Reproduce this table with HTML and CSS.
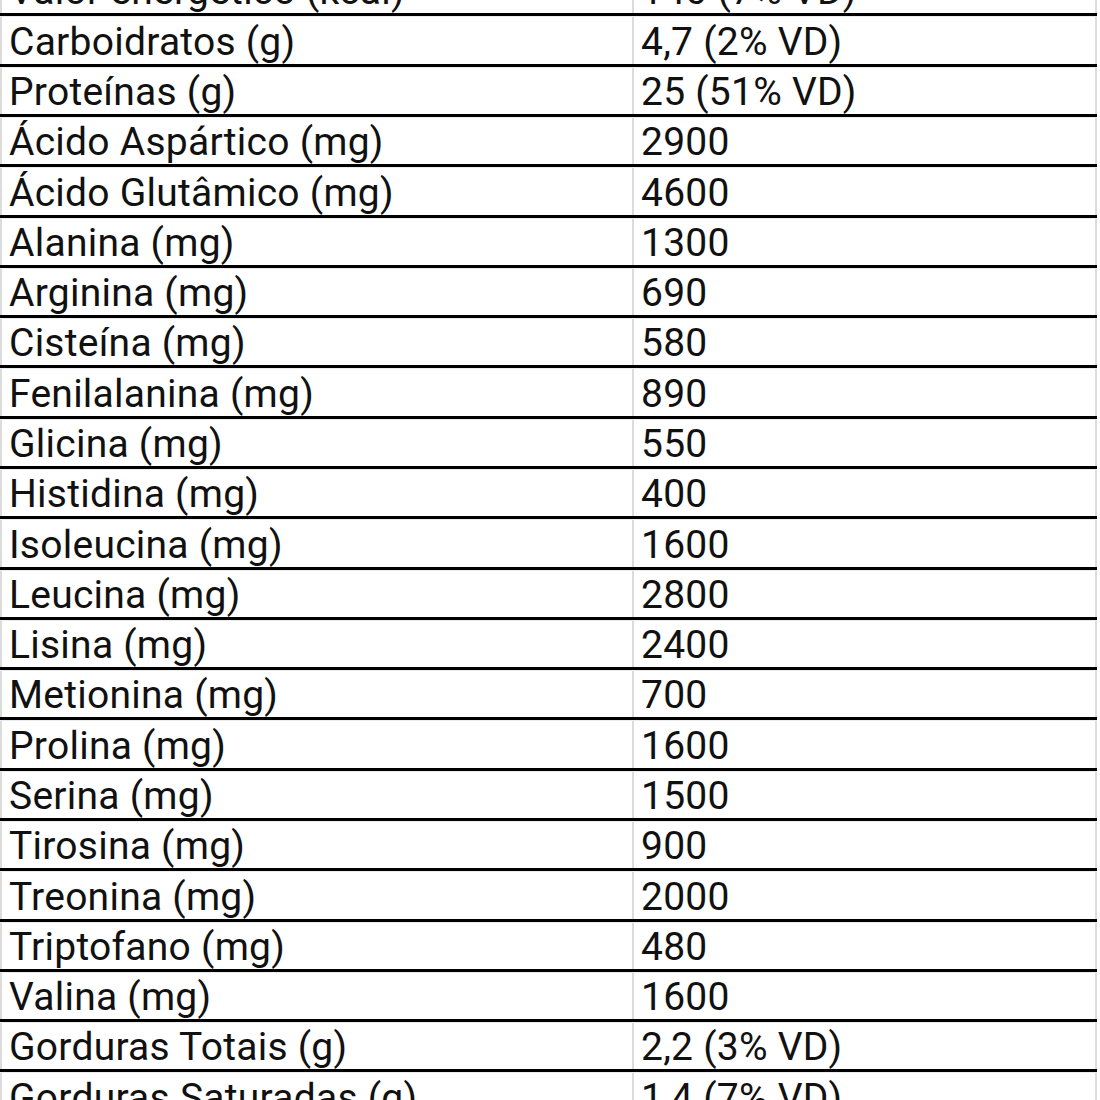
FILE: index.html
```html
<!DOCTYPE html>
<html lang="pt">
<head>
<meta charset="utf-8">
<title>Tabela nutricional</title>
<link rel="stylesheet" href="styles.css">
</head>
<body>
<div class="viewport">
  <div class="sheet">
    <div class="row"><div class="cell name">Valor energético (kcal)</div><div class="cell val">140 (7% VD)</div></div>
    <div class="row"><div class="cell name">Carboidratos (g)</div><div class="cell val">4,7 (2% VD)</div></div>
    <div class="row"><div class="cell name">Proteínas (g)</div><div class="cell val">25 (51% VD)</div></div>
    <div class="row"><div class="cell name">Ácido Aspártico (mg)</div><div class="cell val">2900</div></div>
    <div class="row"><div class="cell name">Ácido Glutâmico (mg)</div><div class="cell val">4600</div></div>
    <div class="row"><div class="cell name">Alanina (mg)</div><div class="cell val">1300</div></div>
    <div class="row"><div class="cell name">Arginina (mg)</div><div class="cell val">690</div></div>
    <div class="row"><div class="cell name">Cisteína (mg)</div><div class="cell val">580</div></div>
    <div class="row"><div class="cell name">Fenilalanina (mg)</div><div class="cell val">890</div></div>
    <div class="row"><div class="cell name">Glicina (mg)</div><div class="cell val">550</div></div>
    <div class="row"><div class="cell name">Histidina (mg)</div><div class="cell val">400</div></div>
    <div class="row"><div class="cell name">Isoleucina (mg)</div><div class="cell val">1600</div></div>
    <div class="row"><div class="cell name">Leucina (mg)</div><div class="cell val">2800</div></div>
    <div class="row"><div class="cell name">Lisina (mg)</div><div class="cell val">2400</div></div>
    <div class="row"><div class="cell name">Metionina (mg)</div><div class="cell val">700</div></div>
    <div class="row"><div class="cell name">Prolina (mg)</div><div class="cell val">1600</div></div>
    <div class="row"><div class="cell name">Serina (mg)</div><div class="cell val">1500</div></div>
    <div class="row"><div class="cell name">Tirosina (mg)</div><div class="cell val">900</div></div>
    <div class="row"><div class="cell name">Treonina (mg)</div><div class="cell val">2000</div></div>
    <div class="row"><div class="cell name">Triptofano (mg)</div><div class="cell val">480</div></div>
    <div class="row"><div class="cell name">Valina (mg)</div><div class="cell val">1600</div></div>
    <div class="row"><div class="cell name">Gorduras Totais (g)</div><div class="cell val">2,2 (3% VD)</div></div>
    <div class="row"><div class="cell name">Gorduras Saturadas (g)</div><div class="cell val">1,4 (7% VD)</div></div>
  </div>
</div>
</body>
</html>
```
FILE: styles.css
```css
html, body {
  margin: 0;
  padding: 0;
  background: #ffffff;
}
.viewport {
  width: 1100px;
  height: 1100px;
  overflow: hidden;
}
.sheet {
  width: 1097px;
  margin-top: -33.8px;
  font-family: Roboto, "Liberation Sans", sans-serif;
  font-size: 39px;
  letter-spacing: 0.25px;
  color: #111111;
}
.row {
  display: grid;
  grid-template-columns: 634px 463px;
  height: 50.29px;
  box-sizing: border-box;
  border-bottom: 3px solid #000000;
  border-top: 1px solid #ececec;
}
.cell {
  display: flex;
  align-items: flex-end;
  padding-bottom: 1px;
  white-space: nowrap;
  overflow: hidden;
  line-height: 42px;
}
.name {
  border-left: 2px solid #dcdcdc;
  border-right: 2px solid #dcdcdc;
  padding-left: 7px;
}
.val {
  border-right: 2px solid #dcdcdc;
  padding-left: 7px;
}
```
